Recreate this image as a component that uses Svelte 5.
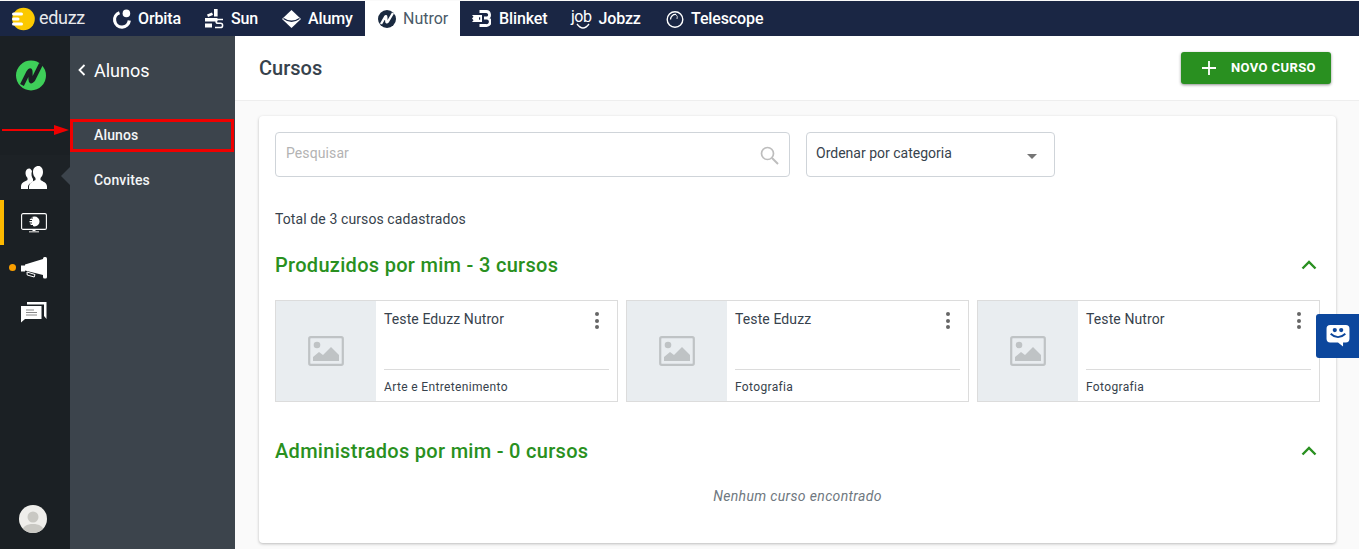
<script>
  const courses = [
    { title: 'Teste Eduzz Nutror', cat: 'Arte e Entretenimento' },
    { title: 'Teste Eduzz', cat: 'Fotografia' },
    { title: 'Teste Nutror', cat: 'Fotografia' }
  ];
</script>

<div class="page">
  <nav class="topbar">
    <div class="brand">
      <svg width="27" height="24" viewBox="0 0 27 24" class="brand-logo">
        <circle cx="11.500" cy="12" r="11.300" fill="#fcc900" />
        <rect x="0" y="5.500" width="11" height="3" rx="1.500" fill="#fff" />
        <rect x="0" y="10.500" width="7.500" height="3" rx="1.500" fill="#fff" />
        <rect x="0" y="15.500" width="11" height="3" rx="1.500" fill="#fff" />
      </svg>
      <span class="eduzz">eduzz</span>
    </div>
    <a class="tab t-orbita">
      <svg width="20" height="20" viewBox="0 0 20 20"><path d="M7.500 3.700A7.400 7.400 0 1 0 17.300 11.500" fill="none" stroke="#fff" stroke-width="3.200"/><circle cx="14.400" cy="4.400" r="3.800" fill="#fff"/></svg>
      <span>Orbita</span>
    </a>
    <a class="tab t-sun">
      <svg width="19" height="20" viewBox="0 0 19 20" fill="#fff"><rect x="9" y="0" width="3.600" height="7.500"/><path d="M2 5.500 L7 3.500 L8 6 L3 8z"/><rect x="0" y="9" width="12.500" height="3.500"/><rect x="0" y="14.500" width="7" height="4"/><path d="M18 10.500h-5a1.800 1.800 0 0 0 0 3.800h2.500a2 2 0 0 1 0 4.200H10" fill="none" stroke="#fff" stroke-width="1.500"/></svg>
      <span>Sun</span>
    </a>
    <a class="tab t-alumy">
      <svg width="19" height="18" viewBox="0 0 19 18"><path d="M9.500 0 L19 9 L9.500 18 L0 9 Z" fill="#fff"/><path d="M1.500 8.500 Q9.500 14 17.500 8.500" fill="none" stroke="#1a2644" stroke-width="1.300"/></svg>
      <span>Alumy</span>
    </a>
    <a class="tab active t-nutror">
      <svg width="18" height="18" viewBox="0 0 18 18"><circle cx="9" cy="9" r="9" fill="#1a2a40"/><path d="M3 14 L7 7 Q8.300 5 8.300 7.500 V11 Q8.300 13.500 10 11.500 L15 3" fill="none" stroke="#fff" stroke-width="2.400" stroke-linejoin="round"/></svg>
      <span>Nutror</span>
    </a>
    <a class="tab t-blinket">
      <svg width="19" height="17" viewBox="0 0 19 17" fill="none"><path d="M7.500 1.500h6.500a3.300 3.300 0 0 1 1 6.500 H12 h3a3.400 3.400 0 0 1-1 7.500h-6.500" stroke="#fff" stroke-width="2.800"/><path d="M0 5h10v7H0l1.500-1.700L0 8.500l1.500-1.700z" fill="#fff"/><rect x="7" y="7.300" width="1.200" height="2.400" fill="#1a2644"/></svg>
      <span>Blinket</span>
    </a>
    <a class="tab t-jobzz">
      <span class="job-mark">job<svg width="14" height="6" viewBox="0 0 14 6"><path d="M1 1 Q7 9 13 1" fill="none" stroke="#fff" stroke-width="1.400"/></svg></span>
      <span>Jobzz</span>
    </a>
    <a class="tab t-tele">
      <svg width="18" height="18" viewBox="0 0 18 18" fill="none" stroke="#fff"><circle cx="9" cy="9.500" r="7.800" stroke-width="1.400"/><path d="M4.500 9.500A5 5 0 0 1 10 4.500" stroke-width="1.300"/><path d="M10 4.500 A4 4 0 0 1 11 9" stroke-width="0.800"/></svg>
      <span>Telescope</span>
    </a>
  </nav>

  <div class="body">
    <aside class="rail">
      <div class="logo">
        <svg width="30" height="31" viewBox="0 0 30 31"><circle cx="15" cy="15.500" r="15" fill="#3ecf59"/><path d="M6 25 L12.500 12 Q14.500 8.500 14.500 12 V19 Q14.500 23 17 20 L25 4" fill="none" stroke="#1b2024" stroke-width="4.200" stroke-linejoin="round"/></svg>
      </div>
      <div class="rail-icons">
        <div class="rail-item current">
          <svg width="26" height="24" viewBox="0 0 26 24" fill="#fff"><path d="M8.500 2.500c-2.500 0-4 2-4 4.500 0 2 1 4 2 5v2c-2 1.500-6 2-6.500 6v3h7v-2c0-3 3.500-4.500 5-5.500v-2.500c-1.500-2-2-5-1-8-.5-1-1.500-2.500-2.500-2.500z"/><path d="M17.500 0c-3.500 0-5.500 2.500-5.500 6 0 2.500 1 4.500 2.500 6v2c-2.500 1.500-6 2.500-6.500 6.500V23H26v-2.500c0-4-4.500-5-6.500-6.500v-2c1.500-1.500 2.500-3.500 2.500-6 0-3.500-2-6-4.500-6z"/></svg>
        </div>
        <div class="rail-item bar">
          <svg width="26" height="20" viewBox="0 0 26 20"><rect x=".6" y=".6" width="24.800" height="15.800" rx="1.500" fill="none" stroke="#fff" stroke-width="1.100"/><circle cx="13.500" cy="8.500" r="5" fill="#fff"/><path d="M7 5h5M6 7.500h5M6 10h5M7 12.500h5" stroke="#1b2024" stroke-width="1"/><rect x="11.500" y="16" width="3" height="2" fill="#fff"/><rect x="8" y="18" width="10" height="1.500" fill="#aaa"/></svg>
        </div>
        <div class="rail-item">
          <span class="dot"></span>
          <svg width="26" height="22" viewBox="0 0 26 22" fill="#fff"><path d="M0 8.500h4v6H0z" /><path d="M4 7.500 L22 2 V18 L4 13.500z"/><rect x="22" y="0" width="4" height="21.500" rx="1.500"/><path d="M6 15l8 2.500-.8 2.500-7-2z" fill="none" stroke="#fff" stroke-width="1"/></svg>
        </div>
        <div class="rail-item">
          <svg width="26" height="21" viewBox="0 0 26 21"><path d="M6 2.500 L6 0H25.500V17L23 14V2.500z" fill="#fff"/><path d="M0 4h20.500v13H4L0 20.500z" fill="#fff"/><path d="M5 8h8M5 10.500h11M5 13h11" stroke="#888" stroke-width="1"/></svg>
        </div>
      </div>
      <div class="avatar">
        <svg width="28" height="28" viewBox="0 0 28 28"><circle cx="14" cy="14" r="14" fill="#efeeeb"/><clipPath id="av"><circle cx="14" cy="14" r="14"/></clipPath><g clip-path="url(#av)" fill="#c9c8c3"><circle cx="14" cy="12" r="5.500"/><path d="M3 28c0-7 5-9 11-9s11 2 11 9z"/></g></svg>
      </div>
    </aside>

    <aside class="sub">
      <div class="sub-title">
        <svg width="8" height="12" viewBox="0 0 8 12"><path d="M6.500 1 L1.500 6 L6.500 11" fill="none" stroke="#fff" stroke-width="1.800"/></svg>
        <span>Alunos</span>
      </div>
      <a class="sub-item first">Alunos</a>
      <a class="sub-item">Convites</a>
    </aside>

    <main class="main">
      <header class="head">
        <h1>Cursos</h1>
        <button class="new">
          <svg width="16" height="16" viewBox="0 0 16 16"><path d="M8 1v14M1 8h14" stroke="#fff" stroke-width="1.800"/></svg>
          <span>NOVO CURSO</span>
        </button>
      </header>

      <section class="card">
        <div class="filters">
          <div class="field search">
            <span>Pesquisar</span>
            <svg width="19" height="19" viewBox="0 0 19 19" fill="none" stroke="#bdbdbd"><circle cx="7.500" cy="7.500" r="6" stroke-width="1.700"/><path d="M12 12l6 6" stroke-width="2"/></svg>
          </div>
          <div class="field order">
            <span>Ordenar por categoria</span>
            <i class="caret"></i>
          </div>
        </div>

        <p class="total">Total de 3 cursos cadastrados</p>

        <div class="group-head first-group">
          <h2>Produzidos por mim - 3 cursos</h2>
          <svg width="16" height="10" viewBox="0 0 16 10"><path d="M1.500 8.500 L8 2 L14.500 8.500" fill="none" stroke="#299020" stroke-width="2.400"/></svg>
        </div>

        <div class="courses">
          {#each courses as c}
            <article class="course">
              <div class="thumb">
                <svg width="36" height="30" viewBox="0 0 36 30"><rect x="1.200" y="1.200" width="33.600" height="27.600" rx="1.500" fill="none" stroke="#bfc3c5" stroke-width="2.200"/><circle cx="9" cy="9" r="3.300" fill="#bfc3c5"/><path d="M5 25v-4l6-5 4 3 8-8 8 8v6z" fill="#bfc3c5"/></svg>
              </div>
              <div class="info">
                <div class="title-row">
                  <span class="title">{c.title}</span>
                  <span class="dots"><i></i><i></i><i></i></span>
                </div>
                <div class="cat">{c.cat}</div>
              </div>
            </article>
          {/each}
        </div>

        <div class="group-head second-group">
          <h2>Administrados por mim - 0 cursos</h2>
          <svg width="16" height="10" viewBox="0 0 16 10"><path d="M1.500 8.500 L8 2 L14.500 8.500" fill="none" stroke="#299020" stroke-width="2.400"/></svg>
        </div>
        <p class="empty">Nenhum curso encontrado</p>
      </section>
    </main>
  </div>

  <div class="chat">
    <svg width="24" height="22" viewBox="0 0 25 24"><path d="M4 0h17a4 4 0 0 1 4 4v11a4 4 0 0 1-4 4h-3v4.500L12.500 19H4a4 4 0 0 1-4-4V4a4 4 0 0 1 4-4z" fill="#fff"/><circle cx="9" cy="5.500" r="2.300" fill="#0c479d"/><circle cx="16" cy="5.500" r="2.300" fill="#0c479d"/><path d="M4.500 9.500 Q12.500 17 20.500 9.500" fill="none" stroke="#0c479d" stroke-width="2"/></svg>
  </div>

  <div class="arrow"></div>
  <div class="redbox"></div>
</div>

<style>
  :global(body) {
    margin: 0;
    font-family: Roboto, "Liberation Sans", sans-serif;
    overflow: hidden;
  }
  .page {
    position: relative;
    width: 1359px;
    height: 549px;
    overflow: hidden;
    display: flex;
    flex-direction: column;
    background: #fafafa;
  }
  .topbar {
    height: 35px;
    margin-top: 1px;
    background: #1a2644;
    display: flex;
    align-items: stretch;
    color: #fff;
    font-size: 16px;
    font-weight: 500;
    letter-spacing: -.12px;
    flex: none;
  }
  .brand {
    display: flex;
    align-items: center;
    width: 101px;
    padding-left: 12px;
    box-sizing: border-box;
  }
  .eduzz {
    font-size: 18px;
    font-weight: 400;
    letter-spacing: -0.3px;
    color: #e8e9ec;
    line-height: 1;
    padding-bottom: 1px;
  }
  .tab {
    display: flex;
    align-items: center;
    gap: 7px;
    box-sizing: border-box;
    padding: 0 10px;
    line-height: 1;
  }
  .t-orbita { padding-left: 11px; width: 93px; gap: 6px; }
  .t-sun { width: 78px; padding-left: 11px; gap: 7px; }
  .t-alumy { width: 93px; padding-left: 10px; gap: 7px; }
  .active {
    background: #fff;
    color: #4a5a68;
    font-weight: 400;
    letter-spacing: 0;
    width: 95px;
    padding-left: 13px;
    gap: 7px;
  }
  .t-blinket { width: 104px; padding-left: 12px; gap: 8px; }
  .t-jobzz { width: 102px; padding-left: 7px; gap: 7px; }
  .t-tele { padding-left: 0; }
  .job-mark {
    position: relative;
    font-size: 16px;
    font-weight: 400;
    letter-spacing: -0.5px;
    display: block;
    margin-top: -3px;
  }
  .job-mark svg {
    position: absolute;
    left: 5px;
    top: 14px;
  }
  .body {
    flex: 1;
    display: flex;
    min-height: 0;
  }
  .rail {
    width: 70px;
    flex: none;
    background: #1b2024;
    display: flex;
    flex-direction: column;
    position: relative;
  }
  .logo {
    display: flex;
    justify-content: center;
    padding: 24px 8px 0 0;
    height: 95px;
    box-sizing: border-box;
  }
  .rail-icons {
    display: flex;
    flex-direction: column;
  }
  .rail-item {
    height: 45px;
    display: flex;
    align-items: center;
    justify-content: center;
    position: relative;
    box-sizing: border-box;
    padding-right: 3px;
  }
  .current {
    background: #1d2226;
    margin-top: 24px;
  }
  .current::after {
    content: "";
    position: absolute;
    right: 0;
    top: 12px;
    border: 9px solid transparent;
    border-right-color: #3c444c;
    border-left-width: 0;
  }
  .bar { border-left: 4px solid #fdb900; padding-right: 7px; }
  .dot {
    position: absolute;
    left: 9px;
    top: 19px;
    width: 7px;
    height: 7px;
    border-radius: 50%;
    background: #fa9f00;
  }
  .avatar {
    margin-top: auto;
    display: flex;
    justify-content: center;
    padding: 0 4px 16px 0;
  }
  .sub {
    width: 165px;
    flex: none;
    background: #3c444c;
    color: #fff;
    font-size: 14px;
    font-weight: 500;
  }
  .sub-title {
    display: flex;
    align-items: center;
    gap: 8px;
    padding: 23px 0 0 8px;
    height: 22px;
    font-size: 18px;
    font-weight: 400;
  }
  .sub-item {
    display: block;
    padding-left: 24px;
    line-height: 45px;
    height: 45px;
    color: #f4f6f7;
    letter-spacing: .15px;
  }
  .first { margin-top: 32px; }
  .main {
    flex: 1;
    min-width: 0;
    display: flex;
    flex-direction: column;
  }
  .head {
    height: 65px;
    flex: none;
    box-sizing: border-box;
    background: #fff;
    border-bottom: 1px solid #eeeeee;
    display: flex;
    align-items: center;
    justify-content: space-between;
    padding: 0 28px 0 24px;
  }
  h1 {
    margin: 0;
    font-size: 20px;
    font-weight: 500;
    color: #37424c;
    padding-bottom: 1px;
  }
  .new {
    width: 150px;
    height: 32px;
    border: 0;
    border-radius: 3px;
    background: #299020;
    color: #fff;
    display: flex;
    align-items: center;
    font: 700 13px Roboto, sans-serif;
    padding: 0 0 0 20px;
    gap: 14px;
    letter-spacing: .4px;
    box-shadow: 0 1px 3px rgba(0,0,0,.45);
    margin-top: -1px;
  }
  .card {
    margin: 15px 23px 0 24px;
    height: 427px;
    box-sizing: border-box;
    background: #fff;
    border-radius: 4px;
    box-shadow: 0 1px 3px rgba(0,0,0,.25);
    padding: 16px 16px 0;
    color: #37424c;
  }
  .filters {
    display: flex;
    gap: 16px;
  }
  .field {
    height: 45px;
    box-sizing: border-box;
    border: 1px solid #cfd4d9;
    border-radius: 4px;
    display: flex;
    align-items: center;
    justify-content: space-between;
    font-size: 14px;
  }
  .search {
    width: 515px;
    padding: 0 10px;
    color: #b3b3b3;
    letter-spacing: .1px;
  }
  .search span { margin-bottom: 4px; }
  .search svg { margin-top: 2px; }
  .order {
    width: 249px;
    padding: 0 16px 0 9px;
    color: #37424c;
  }
  .order span { margin-bottom: 4px; }
  .caret {
    width: 0;
    height: 0;
    border: 5.500px solid transparent;
    border-top: 5px solid #757575;
    border-bottom: 0;
    margin: 3px 1px 0 0;
  }
  .total {
    margin: 34px 0 0;
    font-size: 14px;
    line-height: 16px;
    letter-spacing: .1px;
    color: #37424c;
  }
  .group-head {
    display: flex;
    justify-content: space-between;
    align-items: center;
    padding-right: 3px;
  }
  .first-group { margin-top: 26px; }
  .second-group { margin-top: 37px; }
  h2 {
    margin: 0;
    font-size: 20px;
    line-height: 24px;
    font-weight: 500;
    color: #299020;
    letter-spacing: .3px;
  }
  .courses {
    display: flex;
    gap: 8px;
    margin-top: 23px;
  }
  .course {
    width: 343px;
    height: 102px;
    box-sizing: border-box;
    border: 1px solid #dcdcdc;
    display: flex;
  }
  .thumb {
    width: 100px;
    flex: none;
    background: #e9edf0;
    display: flex;
    align-items: center;
    justify-content: center;
  }
  .info {
    flex: 1;
    padding: 0 8px;
    display: flex;
    flex-direction: column;
    min-width: 0;
  }
  .title-row {
    height: 69px;
    box-sizing: border-box;
    border-bottom: 1px solid #dcdcdc;
    display: flex;
    justify-content: space-between;
    padding-top: 10px;
  }
  .title {
    font-size: 14px;
    line-height: 17px;
    letter-spacing: .1px;
    color: #37424c;
  }
  .dots {
    display: flex;
    flex-direction: column;
    gap: 2.500px;
    padding: 1px 10px 0 0;
  }
  .dots i {
    width: 4px;
    height: 4px;
    border-radius: 50%;
    background: #666;
  }
  .cat {
    font-size: 12px;
    line-height: 14px;
    margin-top: 10px;
    letter-spacing: .35px;
    color: #37424c;
  }
  .empty {
    margin: 25px 0 0;
    text-align: center;
    font-size: 14px;
    font-style: italic;
    line-height: 16px;
    letter-spacing: .35px;
    color: #6f7880;
  }
  .chat {
    position: absolute;
    left: 1316px;
    top: 314px;
    width: 43px;
    height: 44px;
    background: #0c479d;
    border-radius: 3px 0 0 3px;
    display: flex;
    align-items: center;
    justify-content: center;
  }
  .arrow {
    position: absolute;
    left: 2px;
    top: 129px;
    width: 52px;
    height: 2px;
    background: #f00000;
  }
  .arrow::after {
    content: "";
    position: absolute;
    left: 52px;
    top: -4px;
    border-left: 15px solid #f00000;
    border-top: 5px solid transparent;
    border-bottom: 5px solid transparent;
  }
  .redbox {
    position: absolute;
    left: 70px;
    top: 119px;
    width: 164px;
    height: 33px;
    box-sizing: border-box;
    border: 3px solid #f00000;
  }
</style>
